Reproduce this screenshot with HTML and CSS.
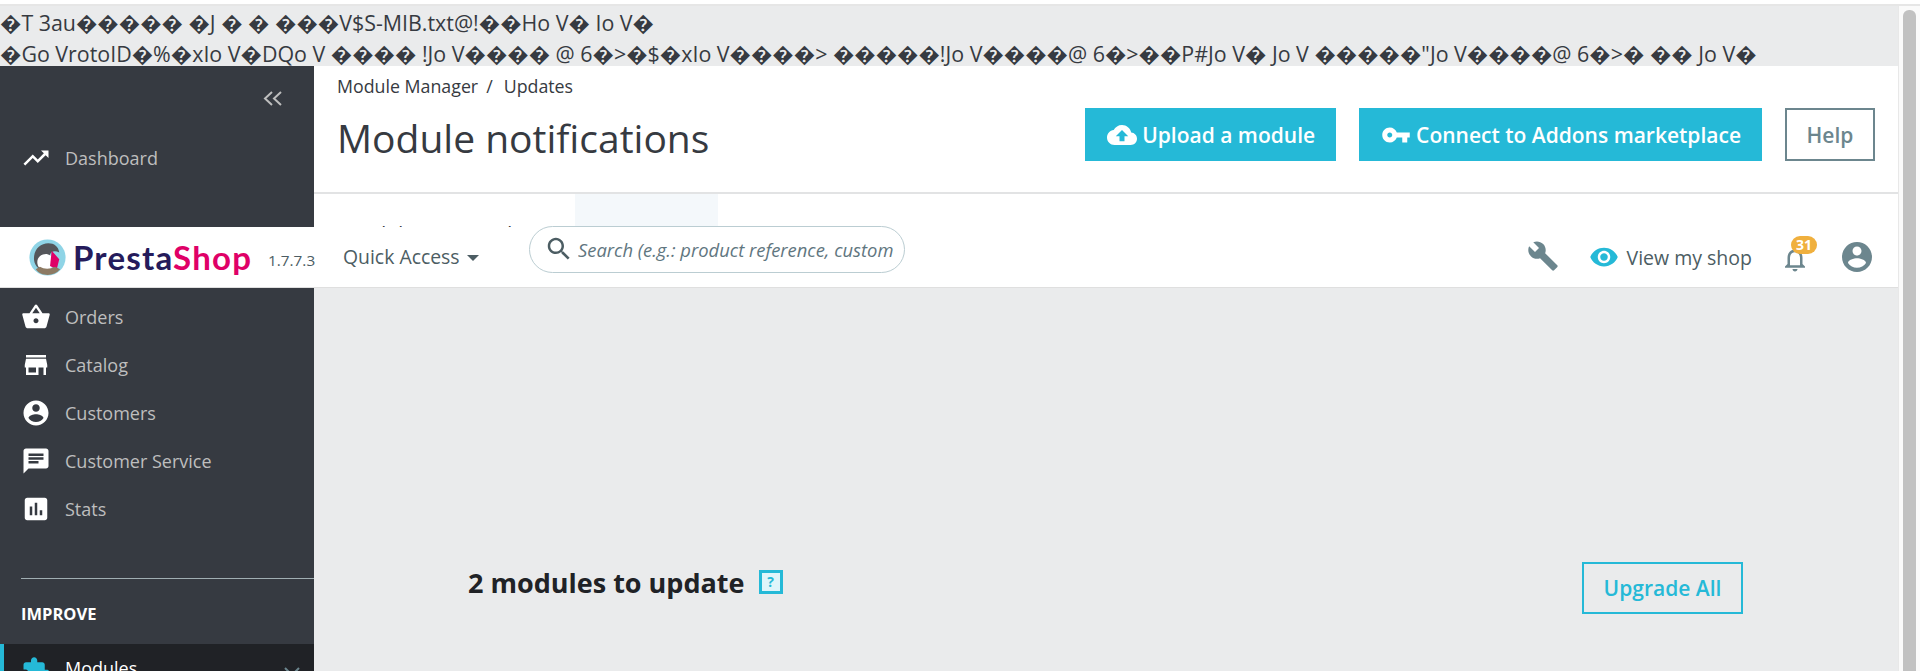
FILE: index.html
```html
<!DOCTYPE html>
<html lang="en">
<head>
  <meta charset="UTF-8" />
  <title>Module notifications</title>
  <link rel="stylesheet" href="styles.css">
</head>
<body>
  <div class="window">
    <div class="page">
      <!-- raw response dump printed above the admin layout -->
      <div class="dump">
        <p>�T 3au����� �J � � ���V$S-MIB.txt@!��Ho V� Io V�</p>
        <p>�Go VrotoID�%�xIo V�DQo V ���� !Jo V���� @ 6�&gt;�$�xIo V����&gt; �����!Jo V����@ 6�&gt;��P#Jo V� Jo V �����"Jo V����@ 6�&gt;� �� Jo V�</p>
      </div>

      <div class="admin">
        <!-- Left: nav -->
        <nav class="sidebar">
          <div class="collapse">
            <svg width="22" height="15" viewBox="0 0 22 15"><path d="M10 1L3 7.5l7 6.5M19 1l-7 6.5 7 6.5" fill="none" stroke="#bebebe" stroke-width="2"/></svg>
          </div>
          <a class="nav-item dash">
            <svg viewBox="0 0 24 24"><path d="M16 6l2.29 2.29-4.88 4.88-4-4L2 16.59 3.41 18l6-6 4 4 6.3-6.29L22 12V6z"/></svg>
            Dashboard
          </a>
          <div class="nav-title sell">SELL</div>
          <a class="nav-item">
            <svg viewBox="0 0 24 24"><path d="M17.21 9l-4.38-6.56c-.19-.28-.51-.42-.83-.42-.32 0-.64.14-.83.43L6.79 9H2c-.55 0-1 .45-1 1 0 .09.01.18.04.27l2.54 9.27c.23.84 1 1.46 1.92 1.46h13c.92 0 1.69-.62 1.93-1.46l2.54-9.27L23 10c0-.55-.45-1-1-1h-4.79zM9 9l3-4.4L15 9H9zm3 8c-1.1 0-2-.9-2-2s.9-2 2-2 2 .9 2 2-.9 2-2 2z"/></svg>
            Orders
          </a>
          <a class="nav-item">
            <svg viewBox="0 0 24 24"><path d="M20 4H4v2h16V4zm1 10v-2l-1-5H4l-1 5v2h1v6h10v-6h4v6h2v-6h1zm-9 4H6v-4h6v4z"/></svg>
            Catalog
          </a>
          <a class="nav-item">
            <svg viewBox="0 0 24 24"><path d="M12 2C6.48 2 2 6.48 2 12s4.48 10 10 10 10-4.48 10-10S17.52 2 12 2zm0 3c1.66 0 3 1.34 3 3s-1.34 3-3 3-3-1.34-3-3 1.34-3 3-3zm0 14.2c-2.5 0-4.71-1.28-6-3.22.03-1.99 4-3.08 6-3.08 1.99 0 5.97 1.09 6 3.08-1.29 1.94-3.5 3.22-6 3.22z"/></svg>
            Customers
          </a>
          <a class="nav-item">
            <svg viewBox="0 0 24 24"><path d="M20 2H4c-1.1 0-1.99.9-1.99 2L2 22l4-4h14c1.1 0 2-.9 2-2V4c0-1.1-.9-2-2-2zM6 9h12v2H6V9zm8 5H6v-2h8v2zm4-6H6V6h12v2z"/></svg>
            Customer Service
          </a>
          <a class="nav-item">
            <svg viewBox="0 0 24 24"><path d="M19 3H5c-1.1 0-2 .9-2 2v14c0 1.1.9 2 2 2h14c1.1 0 2-.9 2-2V5c0-1.1-.9-2-2-2zM9 17H7v-7h2v7zm4 0h-2V7h2v10zm4 0h-2v-4h2v4z"/></svg>
            Stats
          </a>
          <div class="nav-title improve">IMPROVE</div>
          <a class="nav-item active">
            <svg viewBox="0 0 24 24"><path d="M20.5 11H19V7c0-1.1-.9-2-2-2h-4V3.5C13 2.12 11.88 1 10.5 1S8 2.12 8 3.5V5H4c-1.1 0-1.99.9-1.99 2v3.8H3.5c1.49 0 2.7 1.21 2.7 2.7s-1.21 2.7-2.7 2.7H2V20c0 1.1.9 2 2 2h3.8v-1.5c0-1.49 1.21-2.7 2.7-2.7 1.49 0 2.7 1.21 2.7 2.7V22H17c1.1 0 2-.9 2-2v-4h1.5c1.38 0 2.5-1.12 2.5-2.5S21.88 11 20.5 11z"/></svg>
            Modules
            <svg class="chev" width="18" height="10" viewBox="0 0 18 10"><path d="M2 1l7 7 7-7" fill="none" stroke="#6c868e" stroke-width="2"/></svg>
          </a>
        </nav>

        <!-- Right: content -->
        <main class="content">
          <div class="page-head">
            <div class="breadcrumb">Module Manager<span class="sep">/</span>Updates</div>
            <div class="title-row">
              <h1>Module notifications</h1>
              <div class="toolbar">
                <button class="btn btn-fill">
                  <svg viewBox="0 0 24 24"><path d="M19.35 10.04C18.67 6.59 15.64 4 12 4 9.11 4 6.6 5.64 5.35 8.04 2.34 8.36 0 10.91 0 14c0 3.31 2.69 6 6 6h13c2.76 0 5-2.24 5-5 0-2.64-2.05-4.78-4.65-4.96zM14 13v4h-4v-4H7l5-5 5 5h-3z"/></svg>
                  Upload a module
                </button>
                <button class="btn btn-fill">
                  <svg viewBox="0 0 24 24"><path d="M12.65 10C11.83 7.67 9.61 6 7 6c-3.31 0-6 2.69-6 6s2.69 6 6 6c2.61 0 4.83-1.67 5.65-4H17v4h4v-4h2v-4H12.65zM7 14c-1.1 0-2-.9-2-2s.9-2 2-2 2 .9 2 2-.9 2-2 2z"/></svg>
                  Connect to Addons marketplace
                </button>
                <button class="btn btn-help">Help</button>
              </div>
            </div>
          </div>

          <div class="tabs">
            <a class="tab tab-first">Module manager</a>
            <a class="tab tab-alerts">Alerts</a>
            <a class="tab tab-current">Updates</a>
          </div>

          <div class="updates">
            <h2>2 modules to update</h2>
            <span class="help-box">?</span>
            <button class="btn btn-line">Upgrade All</button>
          </div>
        </main>

        <header class="topbar">
          <div class="logo">
            <svg width="37" height="37" viewBox="0 0 44 44">
              <circle cx="22" cy="22" r="21.5" fill="#8fd4e6"/>
              <path d="M6 25C5 13 13 5 23 5c7 0 12 4 13 11-6-3-11-1-12 5l-2 17C13 38 7 33 6 25z" fill="#54565a"/>
              <path d="M10 29c-1-7 5-12 12-11l7 3-3 18c-8 1-15-3-16-10z" fill="#fff"/>
              <path d="M27 14l9 10-3 12-8-4z" fill="#df0067"/>
              <path d="M8 36c6 9 22 9 29 0l-6-3c-6 3-13 3-18 0z" fill="#8d7a63"/>
            </svg>
            <span class="logo-text"><span class="presta">Presta</span><span class="shop">Shop</span></span>
            <span class="version">1.7.7.3</span>
          </div>
          <a class="quick">Quick Access <i class="caret"></i></a>
          <div class="search">
            <svg viewBox="0 0 24 24"><path d="M15.5 14h-.79l-.28-.27C15.41 12.59 16 11.11 16 9.5 16 5.91 13.09 3 9.5 3S3 5.91 3 9.5 5.91 16 9.5 16c1.61 0 3.09-.59 4.23-1.57l.27.28v.79l5 4.99L20.49 19l-4.99-5zm-6 0C7.01 14 5 11.99 5 9.5S7.01 5 9.5 5 14 7.01 14 9.5 11.99 14 9.5 14z"/></svg>
            <span class="placeholder">Search (e.g.: product reference, customer name…)</span>
          </div>
          <div class="top-right">
            <svg class="ico-wrench" viewBox="0 0 24 24"><path d="M22.7 19l-9.1-9.1c.9-2.3.4-5-1.5-6.9-2-2-5-2.4-7.4-1.3L9 6 6 9 1.6 4.7C.4 7.1.9 10.1 2.9 12.1c1.9 1.9 4.6 2.4 6.9 1.5l9.1 9.1c.4.4 1 .4 1.4 0l2.3-2.3c.5-.4.5-1.1.1-1.4z"/></svg>
            <a class="shop-link">
              <svg viewBox="0 0 24 24"><path d="M12 4.5C7 4.5 2.73 7.61 1 12c1.73 4.39 6 7.5 11 7.5s9.27-3.11 11-7.5c-1.73-4.39-6-7.5-11-7.5zM12 17c-2.76 0-5-2.24-5-5s2.24-5 5-5 5 2.24 5 5-2.24 5-5 5zm0-8c-1.66 0-3 1.34-3 3s1.34 3 3 3 3-1.34 3-3-1.34-3-3-3z"/></svg>
              View my shop
            </a>
            <div class="bell">
              <svg viewBox="0 0 24 24"><path d="M12 22c1.1 0 2-.9 2-2h-4c0 1.1.89 2 2 2zm6-6v-5c0-3.07-1.64-5.64-4.5-6.32V4c0-.83-.67-1.5-1.5-1.5s-1.5.67-1.5 1.5v.68C7.63 5.36 6 7.92 6 11v5l-2 2v1h16v-1l-2-2zm-2 1H8v-6c0-2.48 1.51-4.5 4-4.5s4 2.02 4 4.5v6z"/></svg>
              <span class="badge">31</span>
            </div>
            <svg class="ico-user" viewBox="0 0 24 24"><path d="M12 2C6.48 2 2 6.48 2 12s4.48 10 10 10 10-4.48 10-10S17.52 2 12 2zm0 3c1.66 0 3 1.34 3 3s-1.34 3-3 3-3-1.34-3-3 1.34-3 3-3zm0 14.2c-2.5 0-4.71-1.28-6-3.22.03-1.99 4-3.08 6-3.08 1.99 0 5.97 1.09 6 3.08-1.29 1.94-3.5 3.22-6 3.22z"/></svg>
          </div>
        </header>
      </div>
    </div>

    <div class="scrollbar"><div class="thumb"></div></div>
  </div>
</body>
</html>
```

FILE: styles.css
```css
* { box-sizing: border-box; }

html, body {
  margin: 0;
  height: 100%;
  overflow: hidden;
}

body {
  font-family: 'Open Sans', 'DejaVu Sans', sans-serif;
  background: #fff;
  color: #363a41;
  padding-top: 4px;
}

.window {
  display: flex;
  height: 667px;
  border-top: 2px solid #e6e6e6;
}

.page {
  flex: 1;
  min-width: 0;
  display: flex;
  flex-direction: column;
  background: #eaebec;
}

/* scrollbar */
.scrollbar {
  width: 22px;
  background: #fafafa;
  border-left: 1px solid #e8e8e8;
  padding: 4px 4px 0 4px;
}

.thumb {
  height: 100%;
  background: #c1c1c1;
  border-radius: 6px 6px 0 0;
}

/* dump */
.dump {
  height: 60px;
  font-size: 21.4px;
  line-height: 31px;
  padding-top: 1px;
  color: #363a41;
  white-space: nowrap;
  overflow: hidden;
}

.dump p { margin: 0; }

.admin {
  position: relative;
  flex: 1;
  min-height: 0;
  display: flex;
}

/* sidebar */
.sidebar {
  width: 314px;
  flex: none;
  background: #363a41;
  color: #bebebe;
  font-size: 18px;
  overflow: hidden;
}

.collapse {
  display: flex;
  justify-content: flex-end;
  padding: 25px 30px 0 0;
  height: 62px;
}

.nav-item {
  display: flex;
  align-items: center;
  height: 48px;
  gap: 14px;
  padding-left: 22px;
}

.nav-item svg {
  width: 30px;
  height: 30px;
  margin-left: -1px;
  fill: #fff;
  flex: none;
}

.nav-item.dash { margin-top: 6px; }

.nav-title {
  font-weight: 700;
  color: #fff;
  font-size: 16.5px;
  margin-left: 21px;
}

.nav-title.sell {
  height: 111px;
  padding-top: 60px;
}

.nav-title.improve {
  border-top: 1px solid #a0aeb2;
  margin-top: 45px;
  height: 66px;
  padding-top: 23px;
}

.nav-item.active {
  background: #202226;
  border-left: 4px solid #25b9d7;
  padding-left: 18px;
  color: #fff;
  align-items: flex-start;
  padding-top: 12px;
}

.nav-item.active svg { fill: #25b9d7; }

.nav-item.active .chev {
  width: 18px;
  height: 10px;
  margin: 11px 13px 0 auto;
}

/* content */
.content {
  flex: 1;
  min-width: 0;
}

.page-head {
  background: #fff;
  height: 128px;
  border-bottom: 2px solid #e2e3e4;
  padding: 9px 23px 0 23px;
}

.breadcrumb {
  font-size: 17.8px;
  line-height: 22px;
}

.sep { margin: 0 11px 0 8px; }

.title-row {
  display: flex;
  justify-content: space-between;
  align-items: flex-start;
  margin-top: 11px;
}

h1 {
  margin: 0;
  font-weight: 400;
  font-size: 39px;
  line-height: 50px;
  margin-top: 5px;
}

.toolbar {
  display: flex;
  gap: 23px;
}

.btn {
  font-family: inherit;
  font-weight: 600;
  font-size: 21px;
  height: 53px;
  padding: 0 21px 0 22px;
  border: 0;
  display: inline-flex;
  align-items: center;
  gap: 5px;
  background: none;
}

.btn svg {
  width: 30px;
  height: 30px;
  fill: #fff;
}

.btn-fill {
  background: #25b9d7;
  color: #fff;
}

.btn-help {
  width: 90px;
  justify-content: center;
  padding: 0;
  border: 2px solid #6c868e;
  color: #6c868e;
}

.tabs {
  display: flex;
  background: #fff;
  height: 33px;
  padding-left: 31px;
  font-size: 19.5px;
  white-space: nowrap;
}

.tab { padding-top: 26px; }
.tab-first { width: 150px; }
.tab-alerts { width: 80px; }
.tab-current {
  background: #f4f8fb;
  width: 143px;
  text-align: center;
}

.updates {
  display: flex;
  align-items: center;
  margin-top: 335px;
  padding: 0 155px 0 154px;
  color: #202226;
}

h2 {
  margin: 0 0 12px;
  font-size: 27px;
  font-weight: 700;
}

.help-box {
  width: 24px;
  height: 24px;
  margin: 0 0 12px 14px;
  border: 3px solid #25b9d7;
  background: #dff5fa;
  color: #25b9d7;
  font-size: 14px;
  font-weight: 700;
  line-height: 18px;
  text-align: center;
}

.btn-line {
  margin-left: auto;
  width: 161px;
  justify-content: center;
  padding: 0;
  height: 52px;
  border: 2px solid #25b9d7;
  color: #25b9d7;
}

/* top bar */
.topbar {
  position: absolute;
  left: 0;
  right: 0;
  top: 161px;
  height: 61px;
  background: #fff;
  border-bottom: 1px solid #dfdfdf;
  display: flex;
  align-items: center;
  color: #4c5d63;
}

.logo {
  width: 343px;
  flex: none;
  display: flex;
  align-items: center;
  padding-left: 29px;
}

.logo-text {
  font-family: 'Lato', sans-serif;
  font-size: 33px;
  font-weight: 700;
  letter-spacing: 1.2px;
  margin-left: 7px;
}

.presta { color: #251b5b; }
.shop { color: #df0067; }

.version {
  font-size: 15.3px;
  margin: 6px 0 0 16px;
  color: #4c5d63;
}

.quick {
  font-size: 19.4px;
  width: 186px;
  flex: none;
  white-space: nowrap;
  margin-top: -2px;
}

.caret {
  display: inline-block;
  border: 6px solid transparent;
  border-top: 6px solid #4c5d63;
  border-bottom: 0;
  vertical-align: middle;
  margin-left: 2px;
}

.search {
  width: 376px;
  height: 47px;
  flex: none;
  margin-top: -16px;
  border: 1px solid #bbcdd2;
  border-radius: 24px;
  background: #fff;
  display: flex;
  align-items: center;
  padding: 0 10px 0 14px;
  overflow: hidden;
}

.search svg {
  width: 30px;
  height: 30px;
  fill: #4c5d63;
  flex: none;
  margin-right: 4px;
}

.placeholder {
  font-style: italic;
  font-size: 18.4px;
  white-space: nowrap;
  overflow: hidden;
  color: #5f7680;
}

.top-right {
  margin-left: auto;
  display: flex;
  align-items: center;
  padding-right: 23px;
  color: #6c868e;
}

.top-right svg { fill: #6c868e; }

.ico-wrench {
  width: 32px;
  height: 32px;
  margin-right: 30px;
  margin-top: -2px;
}

.shop-link {
  display: flex;
  align-items: center;
  gap: 8px;
  font-size: 19.5px;
  color: #4c5d63;
}

.top-right .shop-link svg {
  width: 30px;
  height: 30px;
  fill: #25b9d7;
}

.bell {
  position: relative;
  width: 30px;
  height: 30px;
  margin: 4px 29px 0 28px;
}

.bell svg { width: 30px; height: 30px; }

.badge {
  position: absolute;
  left: 11px;
  top: -8px;
  width: 26px;
  height: 18px;
  border-radius: 9px;
  background: #f0b03e;
  color: #fff;
  font-size: 14px;
  font-weight: 700;
  line-height: 18px;
  text-align: center;
}

.ico-user {
  width: 36px;
  height: 36px;
}
```
